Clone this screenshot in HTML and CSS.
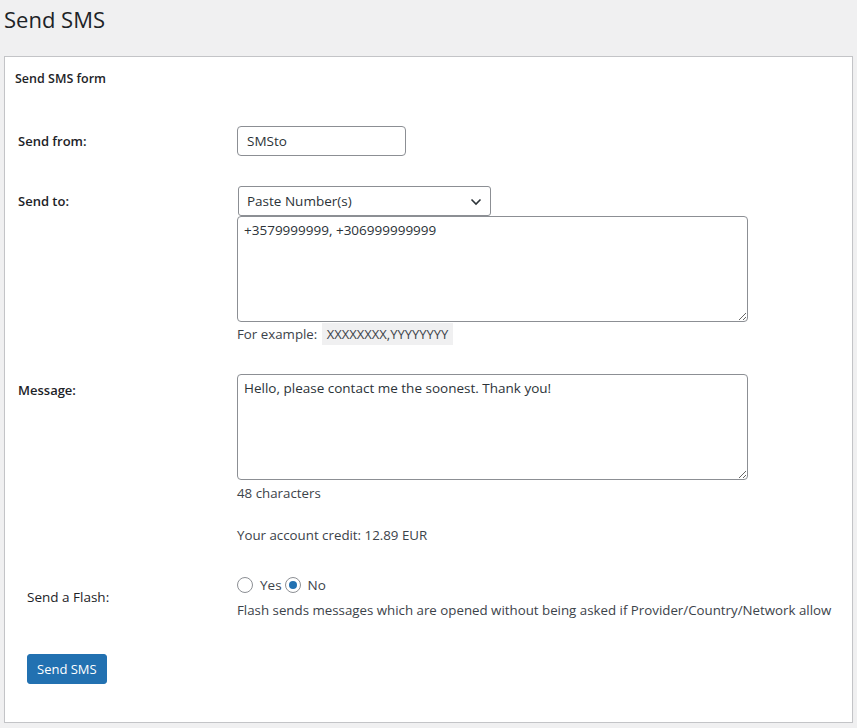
FILE: index.html
```html
<!DOCTYPE html>
<html lang="en">
<head>
<meta charset="utf-8">
<title>Send SMS</title>
<link rel="stylesheet" href="styles.css">
</head>
<body>
<div class="wrap">
  <h1 class="page-title">Send SMS</h1>
  <div class="panel">
    <h2 class="panel-title">Send SMS form</h2>
    <form class="sms-form">
      <div class="row row-from">
        <label class="field-label" for="from">Send from:</label>
        <div class="field">
          <input class="text-input" id="from" type="text" value="SMSto">
        </div>
      </div>
      <div class="row row-to">
        <label class="field-label" for="to-type">Send to:</label>
        <div class="field">
          <div class="select-wrap">
            <select class="select" id="to-type">
              <option>Paste Number(s)</option>
            </select>
            <svg class="select-arrow" width="12" height="8" viewBox="0 0 12 8"><path d="M1.5 1.5 L6 6 L10.5 1.5" fill="none" stroke="#2c3338" stroke-width="1.6"/></svg>
          </div>
          <textarea class="textarea">+3579999999, +306999999999</textarea>
          <p class="example">For example: <code class="code">XXXXXXXX,YYYYYYYY</code></p>
        </div>
      </div>
      <div class="row row-msg">
        <label class="field-label label-top" for="msg">Message:</label>
        <div class="field">
          <textarea class="textarea" id="msg">Hello, please contact me the soonest. Thank you!</textarea>
          <p class="note">48 characters</p>
          <p class="note credit">Your account credit: 12.89 EUR</p>
        </div>
      </div>
      <div class="row row-flash">
        <span class="flash-label">Send a Flash:</span>
        <div class="field">
          <div class="radios">
            <label class="radio-label"><input class="radio" type="radio" name="flash"> Yes</label>
            <label class="radio-label"><input class="radio" type="radio" name="flash" checked> No</label>
          </div>
          <p class="flash-desc">Flash sends messages which are opened without being asked if Provider/Country/Network allow</p>
        </div>
      </div>
      <div class="actions">
        <button class="button" type="button">Send SMS</button>
      </div>
    </form>
  </div>
</div>
</body>
</html>
```
FILE: styles.css
```css
* { box-sizing: border-box; }
html, body { margin: 0; padding: 0; }
body {
  background: #f0f0f1;
  color: #3c434a;
  font-family: "Open Sans", "Noto Sans", sans-serif;
  font-size: 13.3px;
  line-height: 1.4;
}
.wrap { padding: 0 4px; }
.page-title {
  margin: 4px 0 22px;
  font-size: 22px;
  font-weight: 400;
  line-height: 30px;
  color: #1d2327;
}
.panel {
  background: #fff;
  border: 1px solid #c3c4c7;
  box-shadow: 0 1px 1px rgba(0,0,0,0.04);
  height: 667px;
}
.panel-title {
  margin: 0;
  padding: 13px 10px 0;
  font-size: 12.5px;
  font-weight: 600;
  line-height: 18px;
  color: #1d2327;
}
.sms-form { padding-top: 38px; }
.row {
  display: grid;
  grid-template-columns: 232px 1fr;
  align-items: start;
}
.row-to { margin-top: 30px; }
.row-msg { margin-top: 29px; }
.row-flash { margin-top: 27px; align-items: center; }
.field-label {
  padding-left: 13px;
  font-size: 13px;
  font-weight: 600;
  line-height: 30px;
  color: #1d2327;
}
.label-top { padding-top: 1px; }
.flash-label {
  padding-left: 22px;
  font-size: 13.5px;
  color: #1d2327;
}
.field { display: flex; flex-direction: column; align-items: flex-start; }
.text-input {
  width: 169px;
  height: 30px;
  margin: 0;
  padding: 0 9px;
  border: 1px solid #8c8f94;
  border-radius: 4px;
  font: inherit;
  font-size: 13.5px;
  color: #2c3338;
  background: #fff;
}
.select-wrap { position: relative; margin-left: 1px; }
.select {
  appearance: none;
  -webkit-appearance: none;
  width: 253px;
  height: 30px;
  margin: 0;
  padding: 0 24px 0 8px;
  border: 1px solid #8c8f94;
  border-radius: 3px;
  font: inherit;
  font-size: 13.5px;
  color: #2c3338;
  background: #fff;
}
.select-arrow {
  position: absolute;
  right: 9px;
  top: 12px;
  pointer-events: none;
}
.textarea {
  display: block;
  width: 511px;
  height: 106px;
  margin: 0;
  padding: 4px 6px;
  border: 1px solid #8c8f94;
  border-radius: 4px;
  font: inherit;
  font-size: 13.5px;
  line-height: 1.4;
  color: #2c3338;
  background: #fff;
  resize: both;
}
.example {
  margin: 1px 0 0;
  line-height: 22px;
}
.code {
  display: inline-block;
  padding: 0 5px;
  margin-left: 1px;
  background: #f0f0f1;
  font-family: inherit;
  font-size: 13px;
  line-height: 22px;
  color: #3c434a;
}
.note { margin: 0; line-height: 26px; }
.credit { margin-top: 16px; }
.radios { display: flex; align-items: center; height: 20px; }
.radio-label { display: inline-flex; align-items: center; font-size: 13.5px; color: #3c434a; }
.radio-label + .radio-label { margin-left: 3px; }
.radio {
  appearance: none;
  -webkit-appearance: none;
  width: 16px;
  height: 16px;
  margin: 0 7px 0 0;
  border: 1px solid #8c8f94;
  border-radius: 50%;
  background: #fff;
  position: relative;
}
.radio:checked::before {
  content: "";
  position: absolute;
  left: 3px;
  top: 3px;
  width: 8px;
  height: 8px;
  border-radius: 50%;
  background: #2271b1;
}
.flash-desc { margin: 5px 0 0; line-height: 20px; }
.actions { padding: 34px 0 0 22px; }
.button {
  height: 30px;
  padding: 0 9px;
  border: 1px solid #2271b1;
  border-radius: 3px;
  background: #2271b1;
  color: #fff;
  font: inherit;
  font-size: 13px;
  line-height: 28px;
}
```
